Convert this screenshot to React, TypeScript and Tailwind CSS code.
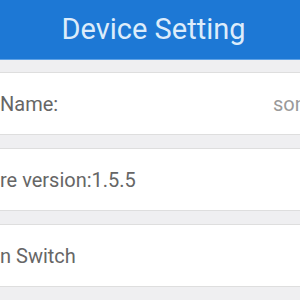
const rows = [
  { label: "Name:", value: "sonoff" },
  { label: "re version:1.5.5", value: "" },
  { label: "n Switch", value: "" },
];

export default function App() {
  return (
    <div className="w-[300px] h-[300px] overflow-hidden bg-[#efeff1] font-['Roboto',sans-serif]">
      {/* --- header --- */}
      <div className="h-[60px] bg-[#1d78d5] flex items-center justify-center border-b border-[#5fa2e6]">
        <h1 className="text-[29px] text-[#dcecfb] pl-[7px]">Device Setting</h1>
      </div>

      {/* --- setting rows --- */}
      <div className="flex flex-col gap-[13px] pt-[12px]">
        {rows.map((row) => (
          <div
            key={row.label}
            className="h-[63px] bg-white border-y border-[#dedede] flex items-center justify-between overflow-hidden"
          >
            <span className="text-[20px] text-[#666666] whitespace-nowrap">
              {row.label}
            </span>
            {row.value && (
              <span className="text-[20px] text-[#9a9a9a] whitespace-nowrap -mr-[31px]">
                {row.value}
              </span>
            )}
          </div>
        ))}
      </div>
    </div>
  );
}
